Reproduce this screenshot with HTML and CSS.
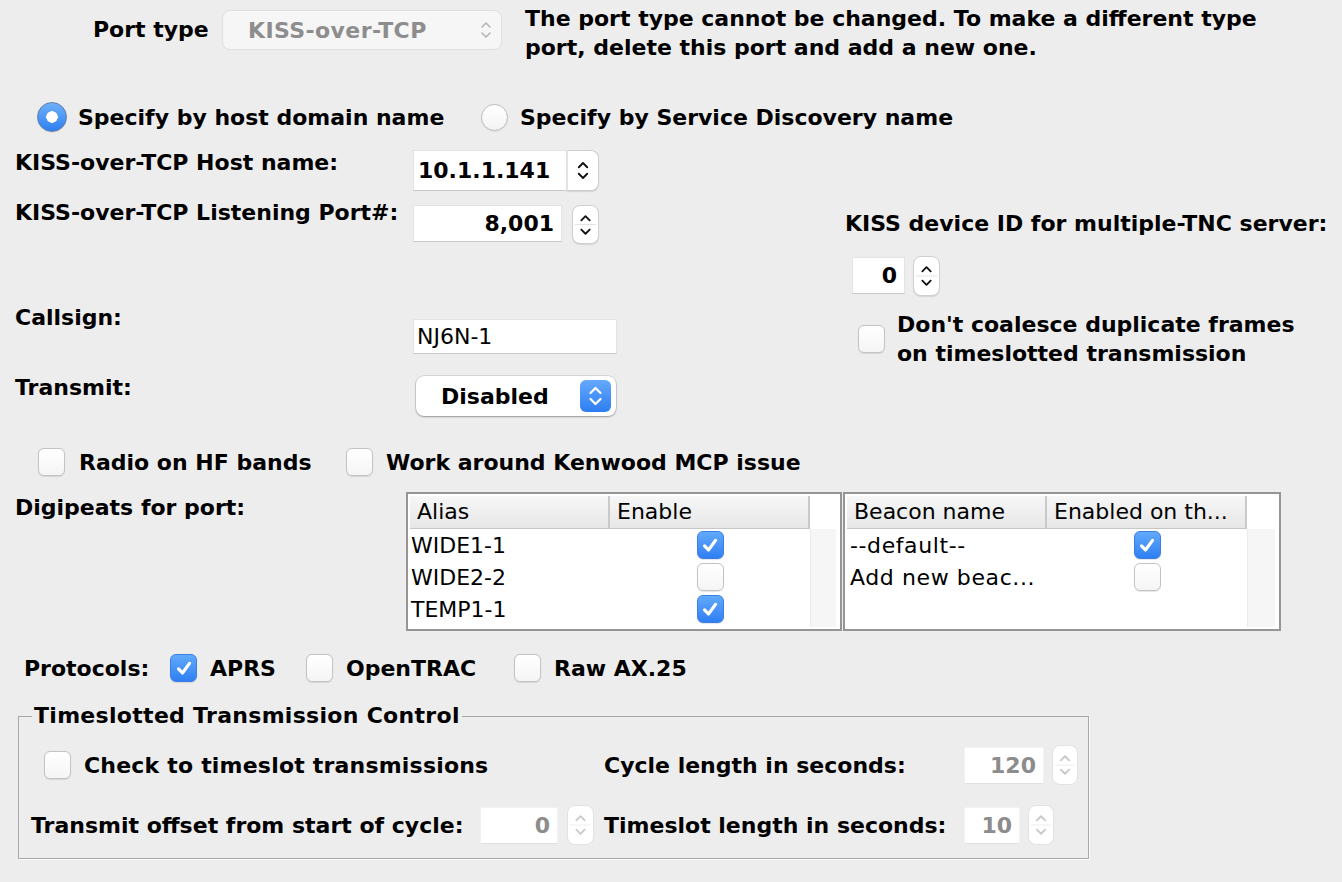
FILE: index.html
```html
<!DOCTYPE html>
<html>
<head>
<meta charset="utf-8">
<title>Port settings</title>
<link rel="stylesheet" href="styles.css">
</head>
<body>
<div class="page">
  <div class="top">
    <div class="porttype">Port type</div>
    <div class="combo combo-off">
      <span class="combo-text">KISS-over-TCP</span>
      <svg class="updown-off" viewBox="0 0 14 22"><path d="M3 8 L7 4 L11 8 M3 14 L7 18 L11 14" fill="none" stroke="#b4b4b4" stroke-width="1.6" stroke-linecap="round" stroke-linejoin="round"/></svg>
    </div>
    <div class="msg">The port type cannot be changed. To make a different type<br>port, delete this port and add a new one.</div>
  </div>

  <div class="radios">
    <div class="ropt ropt1"><span class="radio on"></span><span class="rtext">Specify by host domain name</span></div>
    <div class="ropt"><span class="radio"></span><span class="rtext rtext2">Specify by Service Discovery name</span></div>
  </div>

  <div class="mid">
    <div class="leftcol">
      <div class="frow row-host">
        <div class="flabel">KISS-over-TCP Host name:</div>
        <div class="tfield host-field">10.1.1.141</div>
        <div class="combo-btn"><svg viewBox="0 0 32 41"><path d="M11.5 17 L16 12.5 L20.5 17 M11.5 24 L16 28.5 L20.5 24" fill="none" stroke="#111" stroke-width="2" stroke-linecap="round" stroke-linejoin="round"/></svg></div>
      </div>
      <div class="frow row-port">
        <div class="flabel">KISS-over-TCP Listening Port#:</div>
        <div class="tfield num port-field">8,001</div>
        <div class="spin port-spin"><svg viewBox="0 0 27 37"><path d="M9 14 L13.5 9.5 L18 14 M9 24 L13.5 28.5 L18 24" fill="none" stroke="#111" stroke-width="2" stroke-linecap="round" stroke-linejoin="round"/><path d="M2 18.5 H25" stroke="#e2e2e2" stroke-width="1"/></svg></div>
      </div>
      <div class="frow row-call">
        <div class="flabel">Callsign:</div>
        <div class="tfield plain call-field">NJ6N-1</div>
      </div>
      <div class="frow row-tx">
        <div class="flabel">Transmit:</div>
        <div class="combo combo-on">
          <span class="combo-text2">Disabled</span>
          <span class="bluestep"><svg viewBox="0 0 31 32"><path d="M10.5 13 L15.5 8 L20.5 13 M10.5 19 L15.5 24 L20.5 19" fill="none" stroke="#fff" stroke-width="2.2" stroke-linecap="round" stroke-linejoin="round"/></svg></span>
        </div>
      </div>
    </div>
    <div class="rightcol">
      <div class="kiss-label">KISS device ID for multiple-TNC server:</div>
      <div class="kiss-spin">
        <div class="tfield num kiss-field">0</div>
        <div class="spin kiss-btn"><svg viewBox="0 0 27 40"><path d="M9 15 L13.5 10.5 L18 15 M9 25 L13.5 29.5 L18 25" fill="none" stroke="#111" stroke-width="2" stroke-linecap="round" stroke-linejoin="round"/><path d="M2 20 H25" stroke="#e2e2e2" stroke-width="1"/></svg></div>
      </div>
      <div class="coalesce">
        <span class="cb"></span>
        <span class="ctext">Don't coalesce duplicate frames<br>on timeslotted transmission</span>
      </div>
    </div>
  </div>

  <div class="checkrow">
    <div class="copt copt1"><span class="cb"></span><span class="cbl">Radio on HF bands</span></div>
    <div class="copt"><span class="cb"></span><span class="cbl cbl2">Work around Kenwood MCP issue</span></div>
  </div>

  <div class="digi">
    <div class="digi-label">Digipeats for port:</div>
    <div class="tables">
      <div class="tbl tbl1">
        <div class="thead">
          <div class="th">Alias</div>
          <div class="th">Enable</div>
          <div class="th-fill"></div>
        </div>
        <div class="tbody">
          <div class="rows">
            <div class="tr"><div class="td">WIDE1-1</div><div class="td tc"><span class="cb on"><svg viewBox="0 0 16 16"><path d="M4 8.6 L6.9 11.6 L12 4.6" fill="none" stroke="#fff" stroke-width="2.3" stroke-linecap="round" stroke-linejoin="round"/></svg></span></div></div>
            <div class="tr"><div class="td">WIDE2-2</div><div class="td tc"><span class="cb"></span></div></div>
            <div class="tr"><div class="td">TEMP1-1</div><div class="td tc"><span class="cb on"><svg viewBox="0 0 16 16"><path d="M4 8.6 L6.9 11.6 L12 4.6" fill="none" stroke="#fff" stroke-width="2.3" stroke-linecap="round" stroke-linejoin="round"/></svg></span></div></div>
          </div>
          <div class="track"></div>
        </div>
      </div>
      <div class="tbl tbl2">
        <div class="thead">
          <div class="th">Beacon name</div>
          <div class="th">Enabled on th...</div>
          <div class="th-fill"></div>
        </div>
        <div class="tbody">
          <div class="rows">
            <div class="tr"><div class="td wide">--default--</div><div class="td tc"><span class="cb on"><svg viewBox="0 0 16 16"><path d="M4 8.6 L6.9 11.6 L12 4.6" fill="none" stroke="#fff" stroke-width="2.3" stroke-linecap="round" stroke-linejoin="round"/></svg></span></div></div>
            <div class="tr"><div class="td wide">Add new beac...</div><div class="td tc"><span class="cb"></span></div></div>
          </div>
          <div class="track"></div>
        </div>
      </div>
    </div>
  </div>

  <div class="protocols">
    <div class="p-label">Protocols:</div>
    <div class="popt popt1"><span class="cb on"><svg viewBox="0 0 16 16"><path d="M4 8.6 L6.9 11.6 L12 4.6" fill="none" stroke="#fff" stroke-width="2.3" stroke-linecap="round" stroke-linejoin="round"/></svg></span><span class="pl">APRS</span></div>
    <div class="popt popt2"><span class="cb"></span><span class="pl">OpenTRAC</span></div>
    <div class="popt"><span class="cb"></span><span class="pl">Raw AX.25</span></div>
  </div>

  <fieldset class="timeslot">
    <legend>Timeslotted Transmission Control</legend>
    <div class="ts-grid">
      <div class="ts-c1 ts-check"><span class="cb"></span><span class="cbl">Check to timeslot transmissions</span></div>
      <div class="ts-c2">Cycle length in seconds:</div>
      <div class="ts-c3">
        <div class="tfield num off f-cycle">120</div>
        <div class="spin spin-off"><svg viewBox="0 0 26 40"><path d="M8.5 15 L13 10.5 L17.5 15 M8.5 25 L13 29.5 L17.5 25" fill="none" stroke="#c9c9c9" stroke-width="2" stroke-linecap="round" stroke-linejoin="round"/><path d="M2 20 H24" stroke="#ececec" stroke-width="1"/></svg></div>
      </div>

      <div class="ts-c1 ts-offset">
        <div class="off-label">Transmit offset from start of cycle:</div>
        <div class="tfield num off f-offset">0</div>
        <div class="spin spin-off spin-offset"><svg viewBox="0 0 27 40"><path d="M9 15 L13.5 10.5 L18 15 M9 25 L13.5 29.5 L18 25" fill="none" stroke="#c9c9c9" stroke-width="2" stroke-linecap="round" stroke-linejoin="round"/><path d="M2 20 H25" stroke="#ececec" stroke-width="1"/></svg></div>
      </div>
      <div class="ts-c2">Timeslot length in seconds:</div>
      <div class="ts-c3">
        <div class="tfield num off f-slot">10</div>
        <div class="spin spin-off"><svg viewBox="0 0 26 40"><path d="M8.5 15 L13 10.5 L17.5 15 M8.5 25 L13 29.5 L17.5 25" fill="none" stroke="#c9c9c9" stroke-width="2" stroke-linecap="round" stroke-linejoin="round"/><path d="M2 20 H24" stroke="#ececec" stroke-width="1"/></svg></div>
      </div>
    </div>
  </fieldset>
</div>
</body>
</html>
```

FILE: styles.css
```css
* { box-sizing: border-box; }
html, body { margin: 0; padding: 0; }
body {
  background: #ededed;
  font-family: "DejaVu Sans", "Liberation Sans", sans-serif;
  font-size: 22px;
  font-weight: bold;
  color: #000;
  width: 1342px;
  height: 882px;
  overflow: hidden;
}
.page { display: flex; flex-direction: column; }

/* top */
.top { display: flex; align-items: flex-start; height: 72px; padding-top: 4px; }
.porttype { margin-left: 93px; width: 129px; margin-top: 6px; line-height: 40px; white-space: nowrap; }
.combo { position: relative; display: flex; align-items: center; border-radius: 8px; flex-shrink: 0; }
.combo-off {
  width: 280px; height: 40px; margin-top: 6px;
  background: #f6f6f6; border: 1px solid #dfdfdf;
  color: #8d8d8d;
}
.combo-text { padding-left: 25px; flex: 1; letter-spacing: 0.4px; }
.updown-off { width: 14px; height: 22px; margin-right: 8px; }
.msg { margin-left: 23px; line-height: 29px; white-space: nowrap; }

/* radios */
.radios { display: flex; align-items: center; height: 30px; margin-top: 30px; }
.ropt { display: flex; align-items: center; }
.ropt1 { width: 481px; padding-left: 37px; }
.radio {
  width: 27px; height: 27px; border-radius: 50%;
  background: linear-gradient(#ffffff, #f3f3f3);
  border: 1px solid #bdbdbd;
  box-shadow: 0 0.5px 1px rgba(0,0,0,0.12);
  flex-shrink: 0;
}
.radio.on {
  width: 30px; height: 30px; position: relative;
  background: radial-gradient(circle at 50% 50%, #fff 0 5.5px, transparent 6px), linear-gradient(#6eb0fb, #2f7ff1);
  border: 1.5px solid #5d7fa8;
}
.rtext { margin-left: 11px; white-space: nowrap; }
.rtext2 { margin-left: 12px; }

/* middle */
.mid { display: grid; grid-template-columns: 845px 1fr; margin-top: 18px; }
.frow { display: flex; align-items: flex-start; }
.flabel { width: 413px; padding-left: 15px; line-height: 26px; white-space: nowrap; flex-shrink: 0; }
.tfield {
  background: #fff; flex-shrink: 0;
  border: 1px solid #e3e3e3; border-bottom-color: #c9c9c9;
  display: flex; align-items: center; white-space: nowrap;
}
.tfield.num { justify-content: flex-end; padding-right: 7px; }
.tfield.plain { font-weight: normal; padding-left: 3px; }
.row-host { height: 41px; }
.host-field { width: 154px; height: 41px; padding-left: 4px; }
.combo-btn {
  width: 32px; height: 41px; background: #fff;
  border: 1px solid #cfcfcf; border-left: 1px solid #e4e4e4;
  border-radius: 0 8px 8px 0;
  box-shadow: 0 1px 1px rgba(0,0,0,0.12);
}
.combo-btn svg, .spin svg, .bluestep svg { display: block; width: 100%; height: 100%; }
.row-port { margin-top: 9px; height: 44px; }
.port-field { width: 149px; height: 37px; margin-top: 5px; }
.spin {
  width: 27px; height: 40px; background: #fff; flex-shrink: 0;
  border: 1px solid #cfcfcf; border-radius: 8px;
  box-shadow: 0 1px 1px rgba(0,0,0,0.1);
}
.port-spin { margin-left: 10px; margin-top: 5px; height: 39px; }
.row-call { margin-top: 61px; }
.call-field { width: 204px; height: 35px; margin-top: 14px; }
.row-tx { margin-top: 21px; }
.combo-on {
  width: 200px; height: 40px; margin-left: 3px; margin-top: 1px;
  background: #fff;
  box-shadow: 0 0 0 0.5px rgba(0,0,0,0.18), 0 1px 2px rgba(0,0,0,0.3);
}
.combo-text2 { padding-left: 25px; flex: 1; }
.bluestep {
  width: 31px; height: 32px; margin-right: 5px; border-radius: 6px;
  background: linear-gradient(#64a9fb, #2e7ef2);
}

.rightcol { display: flex; flex-direction: column; }
.kiss-label { margin-top: 61px; line-height: 26px; white-space: nowrap; }
.kiss-spin { display: flex; align-items: flex-start; margin-top: 19px; height: 40px; }
.kiss-field { width: 53px; height: 37px; margin-left: 7px; margin-top: 1px; }
.kiss-btn { margin-left: 8px; }
.coalesce { display: flex; align-items: center; margin-top: 14px; }
.coalesce .cb { margin-left: 13px; }
.ctext { margin-left: 12px; line-height: 29px; white-space: nowrap; }

/* checkbox */
.cb {
  width: 27px; height: 28px; border-radius: 6px; flex-shrink: 0; display: inline-block;
  background: linear-gradient(#ffffff, #f5f5f5);
  border: 1px solid #c3c3c3;
  box-shadow: 0 0.5px 1px rgba(0,0,0,0.1);
}
.cb.on {
  background: linear-gradient(#62aafb, #2f7ff3);
  border: 1px solid #3a7fe6;
  display: inline-flex; align-items: center; justify-content: center;
}
.cb.on svg { width: 22px; height: 22px; }

/* checkbox row */
.checkrow { display: flex; align-items: center; height: 28px; margin-top: 32px; }
.copt { display: flex; align-items: center; }
.copt1 { width: 346px; padding-left: 38px; }
.cbl { margin-left: 14px; white-space: nowrap; }
.cbl2 { margin-left: 13px; }

/* digipeats */
.digi { display: flex; margin-top: 16px; }
.digi-label { width: 406px; padding-left: 15px; padding-top: 3px; line-height: 26px; white-space: nowrap; }
.tables { display: flex; gap: 1px; }
.tbl {
  height: 139px; border: 2px solid #959595; background: #fff; padding: 2px;
  font-weight: normal; display: flex; flex-direction: column;
}
.tbl1 { width: 436px; }
.tbl2 { width: 438px; }
.thead { display: flex; height: 33px; }
.th {
  width: 200px; height: 33px; padding-left: 7px; line-height: 31px;
  background: linear-gradient(#f7f7f7, #e7e7e7);
  border-right: 2px solid #c9c9c9; border-bottom: 1px solid #c6c6c6;
  white-space: nowrap; overflow: hidden;
}
.th-fill { flex: 1; background: #fff; }
.tbody { display: flex; flex: 1; }
.rows { width: 400px; }
.tr { display: flex; height: 32px; align-items: center; }
.td { width: 200px; padding-left: 1px; white-space: nowrap; }
.td.wide { padding-left: 3px; letter-spacing: 0.6px; }
.td.tc { display: flex; justify-content: center; padding-left: 0; }
.track { flex: 1; background: #f6f6f6; border-left: 1px solid #ebebeb; margin-right: 2px; }

/* protocols */
.protocols { display: flex; align-items: center; height: 28px; margin-top: 23px; }
.p-label { width: 170px; padding-left: 24px; white-space: nowrap; }
.popt { display: flex; align-items: center; }
.popt1 { width: 136px; }
.popt2 { width: 208px; }
.pl { margin-left: 13px; white-space: nowrap; }

/* timeslot */
.timeslot {
  margin: 21px 0 0 18px; width: 1071px; padding: 0 0 13px 0;
  border: 1px solid #a9a9a9;
  box-shadow: 1px 1px 0 #fbfbfb;
  min-width: 0;
}
.timeslot legend { margin-left: 13px; padding: 0 2px; line-height: 26px; letter-spacing: 0.3px; }
.ts-grid {
  display: grid; grid-template-columns: 585px 360px 1fr;
  grid-template-rows: 40px 40px; row-gap: 20px; margin-top: 16px;
  align-items: center;
}
.ts-check { display: flex; align-items: center; padding-left: 25px; }
.ts-check .cbl { margin-left: 13px; letter-spacing: 0.2px; }
.ts-c2 { white-space: nowrap; }
.ts-c3 { display: flex; align-items: center; }
.tfield.off { color: #8c8c8c; height: 37px; border-color: #f2f2f2; border-bottom-color: #e0e0e0; }
.f-cycle { width: 80px; }
.f-slot { width: 56px; }
.spin-off { margin-left: 8px; width: 26px; border-color: #e2e2e2; box-shadow: none; }
.ts-offset { display: flex; align-items: center; }
.off-label { width: 461px; padding-left: 12px; white-space: nowrap; }
.f-offset { width: 78px; }
.spin-offset { margin-left: 9px; width: 27px; }
```
